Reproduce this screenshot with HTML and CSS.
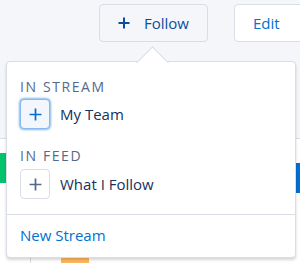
FILE: index.html
```html
<!DOCTYPE html>
<html lang="en">
<head>
    <meta charset="UTF-8">
    <meta name="viewport" content="width=device-width, initial-scale=1.0">
    <title>Follow</title>
    <link rel="stylesheet" href="styles.css">
</head>
<body>
    <div class="header">
        <button class="btn btn-follow">
            <svg class="icon" viewBox="0 0 12 12" width="12" height="12"><path d="M6 0.5V11.5M0.5 6H11.5" stroke="currentColor" stroke-width="2"/></svg>
            Follow
        </button>
        <button class="btn btn-edit">Edit</button>
    </div>

    <div class="page">
        <div class="page-row">
            <span class="tag-green"></span>
            <span class="tag-blue"></span>
        </div>
        <div class="page-foot">
            <span class="tag-orange"></span>
        </div>
    </div>

    <div class="dropdown">
        <div class="nubbin"></div>
        <div class="section">
            <div class="section-title">IN STREAM</div>
            <div class="option">
                <span class="check check-active">
                    <svg viewBox="0 0 12 12" width="13" height="13"><path d="M6 0.5V11.5M0.5 6H11.5" stroke="currentColor" stroke-width="1.6"/></svg>
                </span>
                My Team
            </div>
        </div>
        <div class="section section-feed">
            <div class="section-title">IN FEED</div>
            <div class="option">
                <span class="check">
                    <svg viewBox="0 0 12 12" width="13" height="13"><path d="M6 0.5V11.5M0.5 6H11.5" stroke="currentColor" stroke-width="1.6"/></svg>
                </span>
                What I Follow
            </div>
        </div>
        <div class="footer">
            <a href="#">New Stream</a>
        </div>
    </div>
</body>
</html>
```

FILE: styles.css
```css
body {
    font-family: "Open Sans", "Noto Sans", sans-serif;
    background-color: #f4f6f9;
    margin: 0;
    height: 263px;
    overflow: hidden;
    position: relative;
}
.header {
    display: flex;
    justify-content: flex-end;
    gap: 26px;
    padding-top: 4px;
    margin-right: -5px;
}
.btn {
    height: 38px;
    border: 1px solid #d8dde6;
    border-radius: 4px;
    font-family: inherit;
    font-size: 15px;
    display: flex;
    align-items: center;
    gap: 14px;
}
.btn-follow {
    width: 109px;
    justify-content: center;
    background-color: #f4f6f9;
    color: #0b4f9c;
}
.btn-edit {
    width: 71px;
    padding-left: 18px;
    background-color: white;
    color: #0070d2;
}
.icon {
    color: #0b4f9c;
}
.page {
    margin-top: 96px;
    border-top: 1px solid #d8dde6;
    background: white;
    height: 124px;
}
.page-row {
    display: flex;
    justify-content: space-between;
    padding-top: 14px;
}
.tag-green {
    width: 6px;
    height: 30px;
    background-color: #04c36f;
}
.tag-blue {
    width: 4px;
    height: 30px;
    margin-top: 10px;
    background-color: #0070d2;
}
.page-foot {
    display: flex;
    margin-top: 52px;
    margin-left: 30px;
    padding-left: 30px;
    border-left: 1px solid #d8dde6;
    height: 20px;
}
.tag-orange {
    width: 28px;
    height: 10px;
    margin-top: 12px;
    background-color: #ffb75d;
}
.dropdown {
    position: absolute;
    left: 6px;
    top: 61px;
    width: 288px;
    height: 195px;
    background: white;
    border: 1px solid #d8dde6;
    border-radius: 4px;
    box-shadow: 0 2px 3px rgba(0, 0, 0, 0.16);
}
.nubbin {
    position: absolute;
    left: 134px;
    top: -11px;
    width: 22px;
    height: 22px;
    background: white;
    border-left: 1px solid #d8dde6;
    border-top: 1px solid #d8dde6;
    transform: rotate(45deg);
}
.section {
    position: relative;
    padding: 16px 13px 0;
}
.section-feed {
    padding-top: 18px;
}
.section-title {
    font-size: 14px;
    letter-spacing: 1.6px;
    color: #54698d;
    line-height: 18px;
}
.option {
    display: flex;
    align-items: center;
    gap: 10px;
    margin-top: 3px;
    font-size: 15px;
    color: #16325c;
}
.section-feed .option {
    margin-top: 4px;
}
.check {
    width: 28px;
    height: 28px;
    border: 1px solid #d8dde6;
    border-radius: 4px;
    display: flex;
    align-items: center;
    justify-content: center;
    color: #54698d;
    background: white;
}
.check-active {
    background: #f4f6fe;
    border-color: #8ab8f0;
    box-shadow: 0 0 3px #0070d2;
    color: #0070d2;
}
.footer {
    border-top: 1px solid #d8dde6;
    margin-top: 15px;
    padding: 9px 13px;
}
.footer a {
    color: #0070d2;
    text-decoration: none;
    font-size: 15px;
}
```
